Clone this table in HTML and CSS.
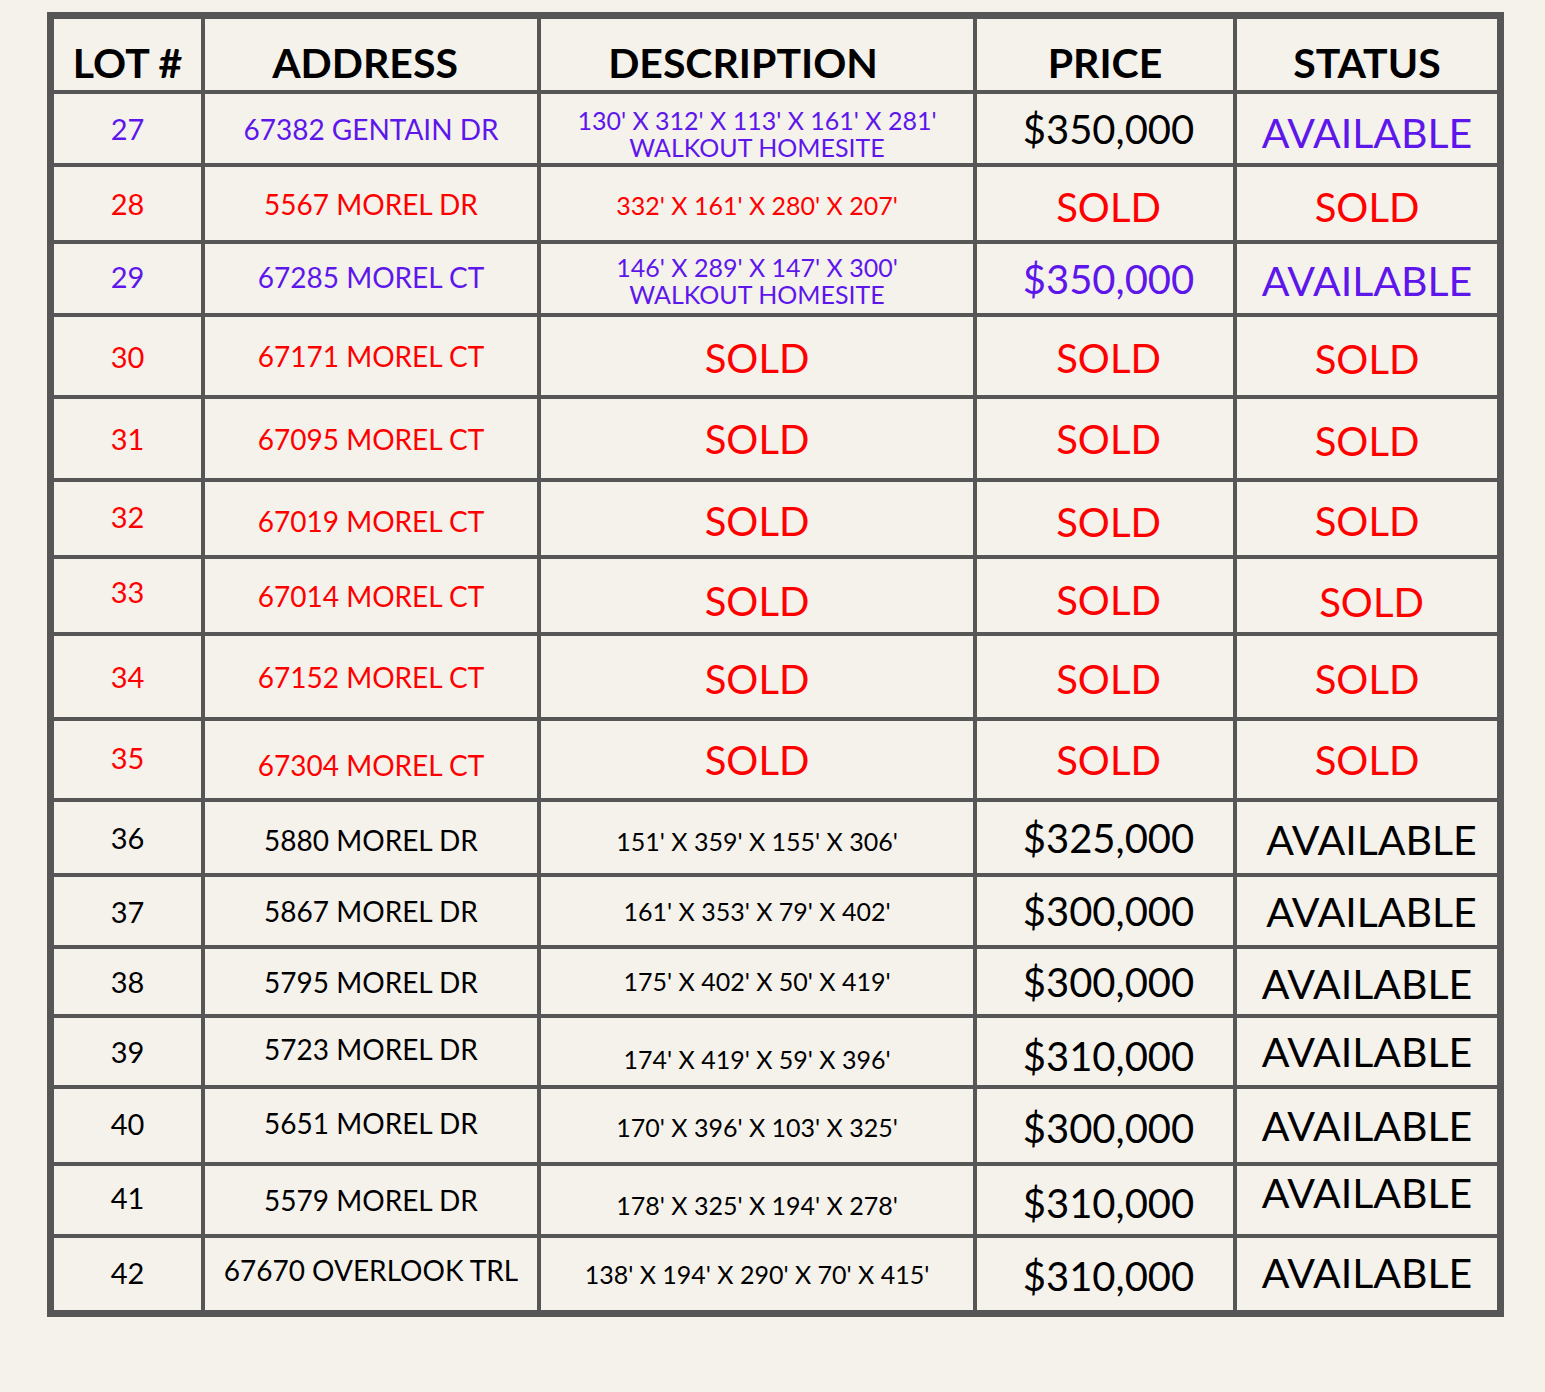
FILE: index.html
```html
<!DOCTYPE html>
<html lang="en">
<head>
<meta charset="utf-8">
<title>Lot Availability</title>
<link rel="stylesheet" href="styles.css">
</head>
<body>
<div class="page">
  <div class="lots">
    <div class="cell head">LOT #</div>
    <div class="cell head head-addr">ADDRESS</div>
    <div class="cell head head-desc">DESCRIPTION</div>
    <div class="cell head">PRICE</div>
    <div class="cell head">STATUS</div>

    <div class="cell lot purple">27</div>
    <div class="cell addr purple">67382 GENTAIN DR</div>
    <div class="cell desc purple dn5">130' X 312' X 113' X 161' X 281'<br>WALKOUT HOMESITE</div>
    <div class="cell price pcol">$350,000</div>
    <div class="cell status purple dn4">AVAILABLE</div>

    <div class="cell lot red">28</div>
    <div class="cell addr red">5567 MOREL DR</div>
    <div class="cell desc red dn2">332' X 161' X 280' X 207'</div>
    <div class="cell sold red pcol dn3">SOLD</div>
    <div class="cell sold red dn3">SOLD</div>

    <div class="cell lot purple up2">29</div>
    <div class="cell addr purple up2">67285 MOREL CT</div>
    <div class="cell desc purple dn2">146' X 289' X 147' X 300'<br>WALKOUT HOMESITE</div>
    <div class="cell price purple pcol">$350,000</div>
    <div class="cell status purple dn2">AVAILABLE</div>

    <div class="cell lot red">30</div>
    <div class="cell addr red">67171 MOREL CT</div>
    <div class="cell sold red dn2">SOLD</div>
    <div class="cell sold red pcol dn2">SOLD</div>
    <div class="cell sold red dn3">SOLD</div>

    <div class="cell lot red">31</div>
    <div class="cell addr red">67095 MOREL CT</div>
    <div class="cell sold red">SOLD</div>
    <div class="cell sold red pcol">SOLD</div>
    <div class="cell sold red dn2">SOLD</div>

    <div class="cell lot red up2">32</div>
    <div class="cell addr red dn2">67019 MOREL CT</div>
    <div class="cell sold red dn2">SOLD</div>
    <div class="cell sold red pcol dn3">SOLD</div>
    <div class="cell sold red dn2">SOLD</div>

    <div class="cell lot red up4">33</div>
    <div class="cell addr red">67014 MOREL CT</div>
    <div class="cell sold red dn5">SOLD</div>
    <div class="cell sold red pcol dn4">SOLD</div>
    <div class="cell sold red dn6 scol">SOLD</div>

    <div class="cell lot red">34</div>
    <div class="cell addr red">67152 MOREL CT</div>
    <div class="cell sold red dn2">SOLD</div>
    <div class="cell sold red pcol dn2">SOLD</div>
    <div class="cell sold red dn2">SOLD</div>

    <div class="cell lot red up2">35</div>
    <div class="cell addr red dn5">67304 MOREL CT</div>
    <div class="cell sold red">SOLD</div>
    <div class="cell sold red pcol">SOLD</div>
    <div class="cell sold red">SOLD</div>

    <div class="cell lot">36</div>
    <div class="cell addr dn2">5880 MOREL DR</div>
    <div class="cell desc dn4">151' X 359' X 155' X 306'</div>
    <div class="cell price pcol">$325,000</div>
    <div class="cell status dn2 scol">AVAILABLE</div>

    <div class="cell lot">37</div>
    <div class="cell addr">5867 MOREL DR</div>
    <div class="cell desc">161' X 353' X 79' X 402'</div>
    <div class="cell price pcol">$300,000</div>
    <div class="cell status scol">AVAILABLE</div>

    <div class="cell lot">38</div>
    <div class="cell addr">5795 MOREL DR</div>
    <div class="cell desc">175' X 402' X 50' X 419'</div>
    <div class="cell price pcol">$300,000</div>
    <div class="cell status dn2">AVAILABLE</div>

    <div class="cell lot">39</div>
    <div class="cell addr up3">5723 MOREL DR</div>
    <div class="cell desc dn8">174' X 419' X 59' X 396'</div>
    <div class="cell price pcol dn4">$310,000</div>
    <div class="cell status">AVAILABLE</div>

    <div class="cell lot up2">40</div>
    <div class="cell addr up3">5651 MOREL DR</div>
    <div class="cell desc dn2">170' X 396' X 103' X 325'</div>
    <div class="cell price pcol dn2">$300,000</div>
    <div class="cell status">AVAILABLE</div>

    <div class="cell lot up3">41</div>
    <div class="cell addr">5579 MOREL DR</div>
    <div class="cell desc dn5">178' X 325' X 194' X 278'</div>
    <div class="cell price pcol dn3">$310,000</div>
    <div class="cell status up8">AVAILABLE</div>

    <div class="cell lot up2">42</div>
    <div class="cell addr up4">67670 OVERLOOK TRL</div>
    <div class="cell desc">138' X 194' X 290' X 70' X 415'</div>
    <div class="cell price pcol dn2">$310,000</div>
    <div class="cell status up2">AVAILABLE</div>
  </div>
</div>
</body>
</html>
```

FILE: styles.css
```css
html, body {
  margin: 0;
  padding: 0;
  background: #f5f2ec;
}

body {
  font-family: "Lato", "Liberation Sans", sans-serif;
  color: #000;
}

.page {
  padding: 12px 0 0 47px;
  height: 1380px;
}

.lots {
  display: grid;
  width: 1443px;
  grid-template-columns: 147px 332px 432px 256px 260px;
  grid-template-rows: 71px 69px 73px 69px 78px 79px 73px 73px 81px 77px 71px 68px 65px 67px 73px 68px 72px;
  gap: 4px;
  background: #565656;
  border: 7px solid #565656;
}

.cell {
  background: #f5f2ec;
  display: flex;
  align-items: center;
  justify-content: center;
  text-align: center;
  line-height: 1;
  white-space: nowrap;
}

.head {
  font-weight: 700;
  font-size: 41px;
  padding-top: 16px;
}

.head-addr {
  padding-right: 12px;
}

.head-desc {
  padding-right: 28px;
}

.lot {
  font-size: 29px;
}

.addr {
  font-size: 28px;
}

.desc {
  font-size: 25px;
  line-height: 27px;
}

.price {
  font-size: 40px;
}

.status {
  font-size: 41px;
}

.sold {
  font-size: 40px;
}

.pcol {
  padding-left: 7px;
}

.scol {
  padding-left: 9px;
}

.purple {
  color: #5e17eb;
}

.red {
  color: #ff0000;
}

/* small vertical nudges so each entry sits where it does in the printed sheet */
.dn2 { padding-top: 4px; }
.dn3 { padding-top: 6px; }
.dn4 { padding-top: 8px; }
.dn5 { padding-top: 10px; }
.dn6 { padding-top: 12px; }
.dn8 { padding-top: 16px; }
.up2 { padding-bottom: 4px; }
.up3 { padding-bottom: 6px; }
.up4 { padding-bottom: 8px; }
.up8 { padding-bottom: 16px; }
```
